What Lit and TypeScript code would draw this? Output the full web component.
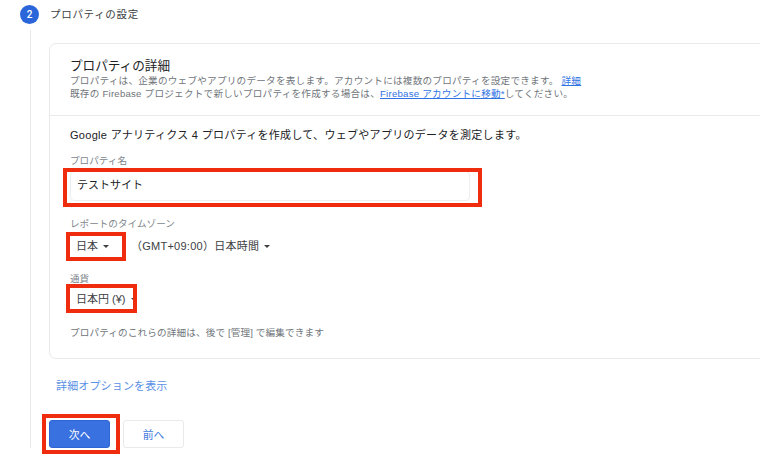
import { LitElement, html, css } from "lit";
import { customElement } from "lit/decorators.js";

const caret = html`<svg class="caret" width="6" height="3" viewBox="0 0 6 3"><path d="M0 0h6L3 3z" fill="#3c4043"/></svg>`;

@customElement("app-root")
export class AppRoot extends LitElement {
  static styles = css`
    :host { display: block; width: 760px; height: 461px; overflow: hidden; background: #fff;
      font-family: "Liberation Sans", "Noto Sans CJK JP", sans-serif; color: #3c4043; }
    .step { display: flex; align-items: center; gap: 11px; padding: 4px 0 0 20px; height: 20px; }
    .num { width: 19px; height: 19px; border-radius: 50%; background: #2a66d9; color: #fff; font: 500 10px/19px Roboto, sans-serif;
      text-align: center; }
    .step-title { font-size: 10.5px; letter-spacing: .7px; line-height: 20px; color: #3c4043; }
    .body { margin: 6px 0 0 30px; border-left: 1px solid #e8e9eb; padding: 13px 0 0 18px; height: 418px; box-sizing: border-box; }
    .card { width: 760px; height: 316px; box-sizing: border-box; border: 1px solid #e8e9eb; border-radius: 7px; }
    .head { height: 72px; box-sizing: border-box; padding: 14px 20px 0; border-bottom: 1px solid #e8e9eb; }
    h2 { margin: 0; font-size: 12.6px; font-weight: 400; line-height: 16px; color: #202124; }
    .desc { font-size: 9.6px; line-height: 13px; letter-spacing: .24px; color: #70757a; }
    a { color: #2f72e4; text-decoration: underline; }
    .main { padding: 11px 20px 0; }
    .lead { font-size: 11px; letter-spacing: .3px; line-height: 16px; color: #202124; }
    label { display: block; font-size: 9.6px; line-height: 12px; color: #80868b; }
    .name-label { margin-top: 12px; }
    .input { position: relative; margin-top: 4px; width: 400px; height: 30px; box-sizing: border-box; border: 1px solid #eceef0; border-radius: 4px;
      padding-left: 6px; font-size: 11px; line-height: 26px; color: #202124; }
    .mark { position: absolute; border: 4px solid #ef2c0d; box-sizing: border-box; pointer-events: none; }
    .mark.name { inset: -4px -13px -7px -8px; }
    .tz-label { margin-top: 17px; }
    .selects { display: flex; align-items: center; gap: 11px; margin-top: 1px; height: 30px; }
    .selects.second { margin-top: -1px; }
    .sel { position: relative; display: inline-flex; align-items: center; gap: 5px; font-size: 11px; line-height: 18px; color: #3c4043; }
    .jp { padding-left: 6px; width: 44px; }
    .tz { letter-spacing: .25px; }
    .mark.jp-m { inset: -5px auto -6px -4px; width: 60px; }
    .cur-label { margin-top: 12px; }
    .cur { padding-left: 6px; }
    .mark.cur-m { inset: -6px auto -5px -4px; width: 71px; }
    .hint { margin-top: 12px; font-size: 9.6px; line-height: 13px; letter-spacing: .14px; color: #70757a; }
    .more { display: block; margin: 19px 0 0 7px; font-size: 11px; letter-spacing: .15px; line-height: 16px; color: #5a8fe6; }
    .actions { display: flex; gap: 13px; margin-top: 26px; }
    button { width: 61px; height: 28px; border-radius: 3px; font: 400 10.8px "Noto Sans CJK JP", sans-serif; padding: 0; }
    .next { position: relative; background: #3a71e0; color: #fff; border: 1px solid #2f66d3; }
    .mark.next-m { inset: -7px -11px -7px -8px; }
    .prev { background: #fff; color: #3f7be0; border: 1px solid #e8e9eb; }
  `;

  render() {
    return html`
      <div class="step"><div class="num">2</div><div class="step-title">プロパティの設定</div></div>
      <div class="body">
        <div class="card">
          <div class="head">
            <h2>プロパティの詳細</h2>
            <div class="desc">プロパティは、企業のウェブやアプリのデータを表します。アカウントには複数のプロパティを設定できます。 <a href="#">詳細</a></div>
            <div class="desc">既存の Firebase プロジェクトで新しいプロパティを作成する場合は、<a href="#">Firebase アカウントに移動*</a>してください。</div>
          </div>
          <div class="main">
            <div class="lead">Google アナリティクス 4 プロパティを作成して、ウェブやアプリのデータを測定します。</div>
            <label class="name-label">プロパティ名</label>
            <div class="input">テストサイト<span class="mark name"></span></div>
            <label class="tz-label">レポートのタイムゾーン</label>
            <div class="selects">
              <div class="sel jp">日本 ${caret}<span class="mark jp-m"></span></div>
              <div class="sel tz">（GMT+09:00）日本時間 ${caret}</div>
            </div>
            <label class="cur-label">通貨</label>
            <div class="selects second">
              <div class="sel cur">日本円 (¥) ${caret}<span class="mark cur-m"></span></div>
            </div>
            <div class="hint">プロパティのこれらの詳細は、後で [管理] で編集できます</div>
          </div>
        </div>
        <span class="more">詳細オプションを表示</span>
        <div class="actions">
          <button class="next">次へ<span class="mark next-m"></span></button>
          <button class="prev">前へ</button>
        </div>
      </div>
    `;
  }
}
